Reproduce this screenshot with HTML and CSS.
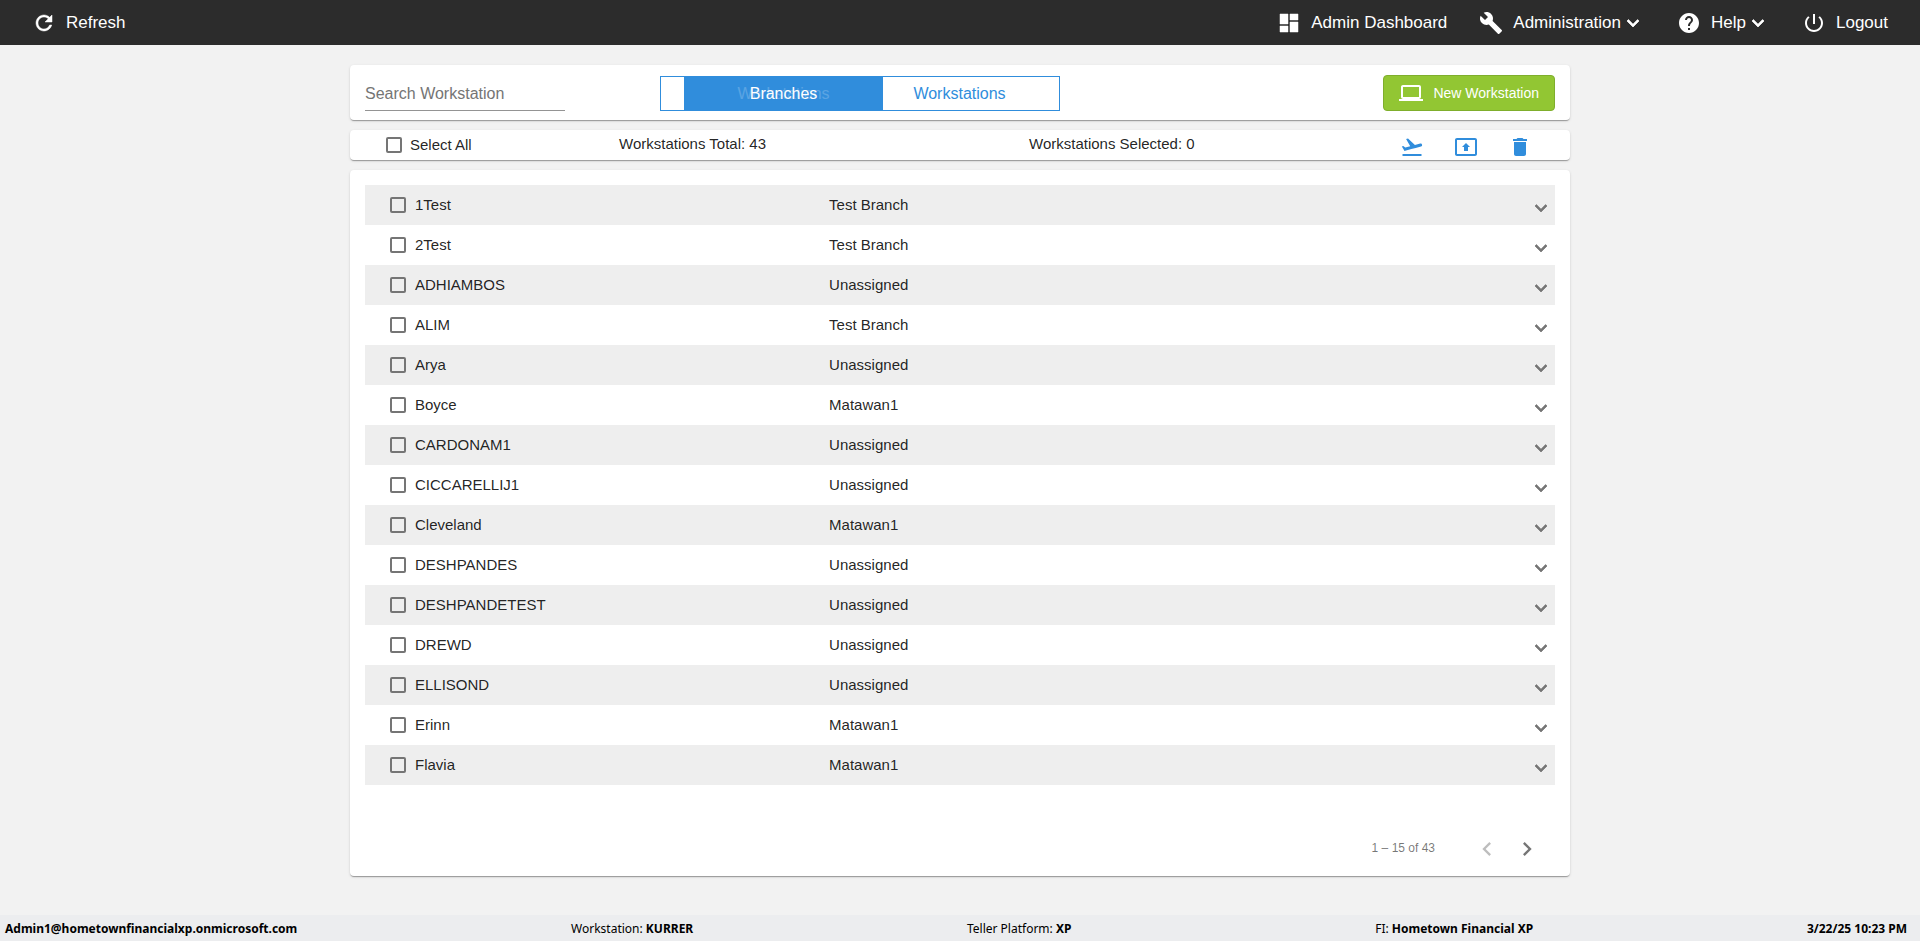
FILE: index.html
```html
<!DOCTYPE html>
<html lang="en">
<head>
  <meta charset="UTF-8">
  <title>Workstations</title>
  <link rel="stylesheet" href="styles.css">
</head>
<body>
  <!-- shared icons -->
  <svg class="sprite" aria-hidden="true">
    <symbol id="expand" viewBox="0 0 24 24"><path stroke="currentColor" stroke-width=".7" d="M7.41 8.59L12 13.17l4.59-4.58L18 10l-6 6-6-6 1.41-1.41z"/></symbol>
  </svg>

  <header class="topbar">
    <button type="button" class="nav-item">
      <svg class="icon" viewBox="0 0 24 24"><path stroke="currentColor" stroke-width=".5" d="M17.65 6.35C16.2 4.9 14.21 4 12 4c-4.42 0-7.99 3.58-7.99 8s3.57 8 7.99 8c3.73 0 6.84-2.55 7.73-6h-2.08c-.82 2.33-3.04 4-5.65 4-3.31 0-6-2.69-6-6s2.69-6 6-6c1.66 0 3.14.69 4.22 1.78L13 11h7V4l-2.35 2.35z"/></svg>
      Refresh
    </button>
    <nav class="nav">
      <a href="#" class="nav-item">
        <svg class="icon" viewBox="0 0 24 24"><path stroke="currentColor" stroke-width=".5" d="M3 13h8V3H3v10zm0 8h8v-6H3v6zm10 0h8V11h-8v10zm0-18v6h8V3h-8z"/></svg>
        Admin Dashboard
      </a>
      <button type="button" class="nav-item">
        <svg class="icon" viewBox="0 0 24 24"><path d="M22.7 19l-9.1-9.1c.9-2.3.4-5-1.5-6.9-2-2-5-2.4-7.4-1.3L9 6 6 9 1.6 4.7C.4 7.1.9 10.1 2.9 12.1c1.9 1.9 4.6 2.4 6.9 1.5l9.1 9.1c.4.4 1 .4 1.4 0l2.3-2.3c.5-.4.5-1.1.1-1.4z"/></svg>
        <span class="nav-label">Administration<svg class="icon" viewBox="0 0 24 24"><use href="#expand"/></svg></span>
      </button>
      <button type="button" class="nav-item">
        <svg class="icon" viewBox="0 0 24 24"><path d="M12 2C6.48 2 2 6.48 2 12s4.48 10 10 10 10-4.48 10-10S17.52 2 12 2zm1 17h-2v-2h2v2zm2.07-7.75l-.9.92C13.45 12.9 13 13.5 13 15h-2v-.5c0-1.1.45-2.1 1.17-2.83l1.24-1.26c.37-.36.59-.86.59-1.41 0-1.1-.9-2-2-2s-2 .9-2 2H8c0-2.21 1.79-4 4-4s4 1.79 4 4c0 .88-.36 1.68-.93 2.25z"/></svg>
        <span class="nav-label">Help<svg class="icon" viewBox="0 0 24 24"><use href="#expand"/></svg></span>
      </button>
      <a href="#" class="nav-item">
        <svg class="icon" viewBox="0 0 24 24"><path d="M13 3h-2v10h2V3zm4.83 2.17l-1.42 1.42C17.99 7.86 19 9.81 19 12c0 3.87-3.13 7-7 7s-7-3.13-7-7c0-2.19 1.01-4.14 2.58-5.42L6.17 5.17C4.23 6.82 3 9.26 3 12c0 4.97 4.03 9 9 9s9-4.03 9-9c0-2.74-1.23-5.18-3.17-6.83z"/></svg>
        Logout
      </a>
    </nav>
  </header>

  <main class="content">
    <section class="card toolbar">
      <input class="search" type="text" placeholder="Search Workstation" aria-label="Search Workstation">
      <div class="tabs">
        <button type="button" class="tab tab-active"><span class="tab-ghost">Workstations</span><span class="tab-text">Branches</span></button>
        <button type="button" class="tab">Workstations</button>
      </div>
      <button type="button" class="btn-new">
        <svg class="icon" viewBox="0 0 24 24"><path d="M20 18c1.1 0 1.99-.9 1.99-2L22 6c0-1.1-.9-2-2-2H4c-1.1 0-2 .9-2 2v10c0 1.1.9 2 2 2H0v2h24v-2h-4zM4 6h16v10H4V6z"/></svg>
        New Workstation
      </button>
    </section>

    <section class="card summary">
      <label class="check"><input type="checkbox" id="selectAll"><span>Select All</span></label>
      <span class="count">Workstations Total: 43</span>
      <div class="summary-end">
        <span class="count">Workstations Selected: <span id="selected">0</span></span>
        <div class="actions">
          <button type="button" aria-label="Deploy"><svg class="icon" viewBox="0 0 24 24"><path d="M2.5 19h19v2h-19zm19.57-9.36c-.21-.8-1.04-1.28-1.84-1.06L14.92 10l-6.9-6.43-1.93.51 4.14 7.17-4.97 1.33-1.97-1.54-1.45.39 1.82 3.16.77 1.33 1.6-.43 5.31-1.42 4.35-1.16L21 11.49c.81-.23 1.28-1.05 1.07-1.85z"/></svg></button>
          <button type="button" aria-label="Assign"><svg class="icon" viewBox="0 0 24 24"><path d="M21 3H3c-1.11 0-2 .89-2 2v14c0 1.11.89 2 2 2h18c1.11 0 2-.89 2-2V5c0-1.11-.89-2-2-2zm0 16.02H3V4.98h18v14.04zM10 12H8l4-4 4 4h-2v4h-4v-4z"/></svg></button>
          <button type="button" aria-label="Delete"><svg class="icon" viewBox="0 0 24 24"><path d="M6 19c0 1.1.9 2 2 2h8c1.1 0 2-.9 2-2V7H6v12zM19 4h-3.5l-1-1h-5l-1 1H5v2h14V4z"/></svg></button>
        </div>
      </div>
    </section>

    <section class="card list">
      <table class="workstations">
        <tbody id="rows"></tbody>
      </table>
      <div class="paginator">
        <span>1 – 15 of 43</span>
        <div class="pages">
          <button type="button" disabled aria-label="Previous page"><svg viewBox="0 0 24 24"><path d="M15.41 7.41L14 6l-6 6 6 6 1.41-1.41L10.83 12z"/></svg></button>
          <button type="button" aria-label="Next page"><svg viewBox="0 0 24 24"><path d="M10 6L8.59 7.41 13.17 12l-4.58 4.59L10 18l6-6z"/></svg></button>
        </div>
      </div>
    </section>
  </main>

  <footer class="statusbar">
    <b>Admin1@hometownfinancialxp.onmicrosoft.com</b>
    <span>Workstation: <b>KURRER</b></span>
    <span class="platform">Teller Platform: <b>XP</b></span>
    <span>FI: <b>Hometown Financial XP</b></span>
    <b>3/22/25 10:23 PM</b>
  </footer>

  <script src="script.js"></script>
</body>
</html>
```
FILE: styles.css
```css
* {
  box-sizing: border-box;
}

body {
  margin: 0;
  min-height: 100vh;
  display: flex;
  flex-direction: column;
  background-color: #f2f2f2;
  color: rgba(0,0,0,0.87);
  font-family: Arial, "Liberation Sans", sans-serif;
  font-size: 15px;
}

button, input {
  font-family: inherit;
}

button {
  padding: 0;
  border: none;
  background: none;
  color: inherit;
  cursor: pointer;
}

.sprite {
  display: none;
}

.icon {
  display: block;
  flex: none;
  width: 24px;
  height: 24px;
  fill: currentColor;
}

/* top bar */
.topbar {
  display: flex;
  justify-content: space-between;
  height: 45px;
  padding: 0 32px;
  background-color: #2c2c2c;
  color: #fff;
}

.nav {
  display: flex;
  gap: 32px;
}

.nav-item {
  display: flex;
  align-items: center;
  gap: 10px;
  color: #fff;
  font-size: 17px;
  text-decoration: none;
}

.nav-label {
  display: flex;
  align-items: center;
}

/* cards */
.content {
  display: flex;
  flex-direction: column;
  gap: 10px;
  width: 100%;
  max-width: 1260px;
  margin: 0 auto;
  padding: 20px;
}

.card {
  background: #fff;
  border-radius: 4px;
  box-shadow: 0 2px 1px -1px rgba(0,0,0,0.2), 0 1px 1px 0 rgba(0,0,0,0.14), 0 1px 3px 0 rgba(0,0,0,0.12);
}

.toolbar {
  display: grid;
  grid-template-columns: 295fr 400px 495fr;
  align-items: center;
  padding: 10px 15px 9px;
}

.search {
  width: 200px;
  height: 35px;
  padding: 2px 0 0;
  border: none;
  border-bottom: 1px solid #949494;
  outline: none;
  background: none;
  font-size: 16px;
}

.search::placeholder {
  color: #757575;
}

.tabs {
  position: relative;
  display: flex;
  justify-content: flex-end;
  height: 35px;
  border: 1px solid #308ddc;
}

.tab {
  width: 50%;
  padding-top: 2px;
  color: #308ddc;
  font-size: 16px;
}

.tab-active {
  position: absolute;
  top: 0;
  bottom: 0;
  left: 23px;
  display: grid;
  place-items: center;
  background-color: #308ddc;
  color: #fff;
}

.tab-ghost, .tab-text {
  grid-area: 1 / 1;
}

.tab-ghost {
  opacity: 0.2;
}

.btn-new {
  justify-self: end;
  display: flex;
  align-items: center;
  gap: 10px;
  height: 36px;
  padding: 0 15px;
  border: 1px solid #7fae2c;
  border-radius: 4px;
  background-color: #92c633;
  color: #fff;
  font-size: 14px;
}

.summary {
  display: grid;
  grid-template-columns: 269fr 410fr 541fr;
  align-items: center;
  height: 30px;
}

.summary .check {
  padding-left: 36px;
}

.count {
  padding-bottom: 4px;
}

.summary-end {
  display: flex;
  justify-content: space-between;
  align-items: center;
  padding-right: 38px;
}

.actions {
  display: flex;
  gap: 30px;
  padding-top: 4px;
  color: #308ddc;
}

.check {
  display: flex;
  align-items: center;
  gap: 8px;
}

.check span {
  padding-bottom: 2px;
}

.check input {
  appearance: none;
  width: 16px;
  height: 16px;
  margin: 0;
  border: 2px solid #757575;
  border-radius: 2px;
}

.check input:checked {
  border-color: #308ddc;
  background-color: #308ddc;
}

/* workstation rows */
.list {
  padding: 15px 15px 0;
}

.workstations {
  width: 100%;
  border-collapse: collapse;
  table-layout: fixed;
}

.workstations tr:nth-child(odd) {
  background-color: #eee;
}

.workstations td {
  height: 40px;
  padding: 0 0 2px;
}

.workstations td:first-child {
  width: 39%;
  padding: 0 0 0 25px;
}

.workstations td:last-child {
  width: 26px;
  padding: 5px 0 0;
  color: #757575;
}

.workstations .check {
  gap: 9px;
}

.workstations td:last-child button {
  display: block;
}

.paginator {
  display: flex;
  justify-content: flex-end;
  align-items: center;
  gap: 32px;
  height: 56px;
  margin-top: 35px;
  padding-right: 8px;
  color: rgba(0,0,0,0.54);
  font-size: 12px;
}

.pages {
  display: flex;
  padding-top: 2px;
}

.pages button {
  display: grid;
  place-items: center;
  width: 40px;
  height: 40px;
}

.pages svg {
  width: 28px;
  fill: currentColor;
}

.pages button:disabled {
  color: rgba(0,0,0,0.26);
}

/* status bar */
.statusbar {
  display: flex;
  justify-content: space-between;
  align-items: center;
  height: 26px;
  margin-top: auto;
  padding: 0 13px 0 5px;
  background-color: #ecedef;
  color: #000;
  font-family: "Segoe UI", "Noto Sans", sans-serif;
  font-size: 12px;
}

.platform {
  padding-right: 30px;
}
```
FILE: script.js
```js
const workstations = [
  ['1Test', 'Test Branch'],
  ['2Test', 'Test Branch'],
  ['ADHIAMBOS', 'Unassigned'],
  ['ALIM', 'Test Branch'],
  ['Arya', 'Unassigned'],
  ['Boyce', 'Matawan1'],
  ['CARDONAM1', 'Unassigned'],
  ['CICCARELLIJ1', 'Unassigned'],
  ['Cleveland', 'Matawan1'],
  ['DESHPANDES', 'Unassigned'],
  ['DESHPANDETEST', 'Unassigned'],
  ['DREWD', 'Unassigned'],
  ['ELLISOND', 'Unassigned'],
  ['Erinn', 'Matawan1'],
  ['Flavia', 'Matawan1']
];

const rows = document.getElementById('rows');
const selectAll = document.getElementById('selectAll');

rows.innerHTML = workstations.map(([name, branch]) => `
  <tr>
    <td><label class="check"><input type="checkbox"><span>${name}</span></label></td>
    <td>${branch}</td>
    <td><button type="button" aria-label="Expand ${name}"><svg class="icon" viewBox="0 0 24 24"><use href="#expand"/></svg></button></td>
  </tr>`).join('');

function updateSelected() {
  document.getElementById('selected').textContent = rows.querySelectorAll('input:checked').length;
}

rows.addEventListener('change', updateSelected);

selectAll.addEventListener('change', () => {
  rows.querySelectorAll('input').forEach(i => {
    i.checked = selectAll.checked;
  });
  updateSelected();
});
```
